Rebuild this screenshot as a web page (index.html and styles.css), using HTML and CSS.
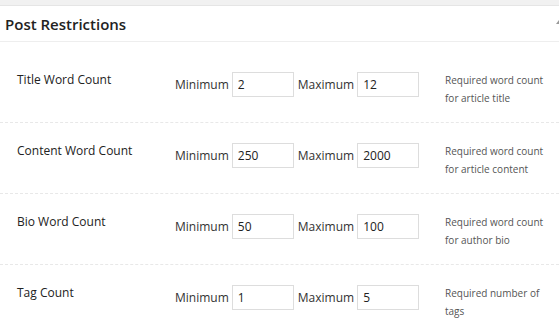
FILE: index.html
```html
<!DOCTYPE html>
<html>
<head>
	<meta charset="UTF-8">
	<title>Post Restrictions</title>
	<link rel="stylesheet" href="styles.css">
</head>
<body>
	<div class="postbox">
		<div class="hndle">
			<h3>Post Restrictions</h3>
			<span class="toggle"></span>
		</div>
		<div class="inside">
			<div class="row">
				<div class="label">Title Word Count</div>
				<div class="controls">
					<span>Minimum</span><input type="text" value="2">
					<span>Maximum</span><input type="text" value="12">
				</div>
				<p class="desc">Required word count<br>for article title</p>
			</div>
			<div class="row">
				<div class="label">Content Word Count</div>
				<div class="controls">
					<span>Minimum</span><input type="text" value="250">
					<span>Maximum</span><input type="text" value="2000">
				</div>
				<p class="desc">Required word count<br>for article content</p>
			</div>
			<div class="row">
				<div class="label">Bio Word Count</div>
				<div class="controls">
					<span>Minimum</span><input type="text" value="50">
					<span>Maximum</span><input type="text" value="100">
				</div>
				<p class="desc">Required word count<br>for author bio</p>
			</div>
			<div class="row">
				<div class="label">Tag Count</div>
				<div class="controls">
					<span>Minimum</span><input type="text" value="1">
					<span>Maximum</span><input type="text" value="5">
				</div>
				<p class="desc">Required number of<br>tags</p>
			</div>
		</div>
	</div>
</body>
</html>
```

FILE: styles.css
```css
* {
	margin: 0;
	padding: 0;
	box-sizing: border-box;
}

body {
	font-family: "Open Sans", "Liberation Sans", sans-serif;
	color: #333;
	padding-top: 5px;
	background: linear-gradient(#f1f1f1, #f1f1f1) top / 100% 5px no-repeat, #fff;
}

.postbox {
	border-top: 1px solid #e5e5e5;
	background-color: #fff;
}

.hndle {
	height: 36px;
	border-bottom: 1px solid #eee;
	padding-left: 5px;
	position: relative;
	display: flex;
	align-items: center;
}

.hndle h3 {
	font-size: 15px;
	font-weight: 600;
	color: #222;
}

.toggle {
	position: absolute;
	right: -3px;
	top: 14px;
	width: 0;
	height: 0;
	border-left: 3px solid transparent;
	border-right: 3px solid transparent;
	border-bottom: 4px solid #999;
}

.inside {
	padding-top: 10px;
}

.row {
	height: 71px;
	border-bottom: 1px dashed #e8e8e8;
	padding: 19px 0 0 17px;
	display: flex;
	align-items: flex-start;
	font-size: 12px;
	line-height: 18px;
	color: #222;
}

.label {
	width: 158px;
}

.controls {
	width: 270px;
	display: flex;
	align-items: center;
	margin-top: 1px;
	color: #333;
}

.controls span + input {
	margin-left: 3px;
}

.controls input + span {
	margin-left: 4px;
}

.controls input {
	width: 62px;
	height: 25px;
	border: 1px solid #ddd;
	padding: 0 5px;
	font: 12px "Open Sans", "Liberation Sans", sans-serif;
	color: #222;
	outline: none;
}

.desc {
	font-size: 10px;
	line-height: 18px;
	color: #555;
}
```
